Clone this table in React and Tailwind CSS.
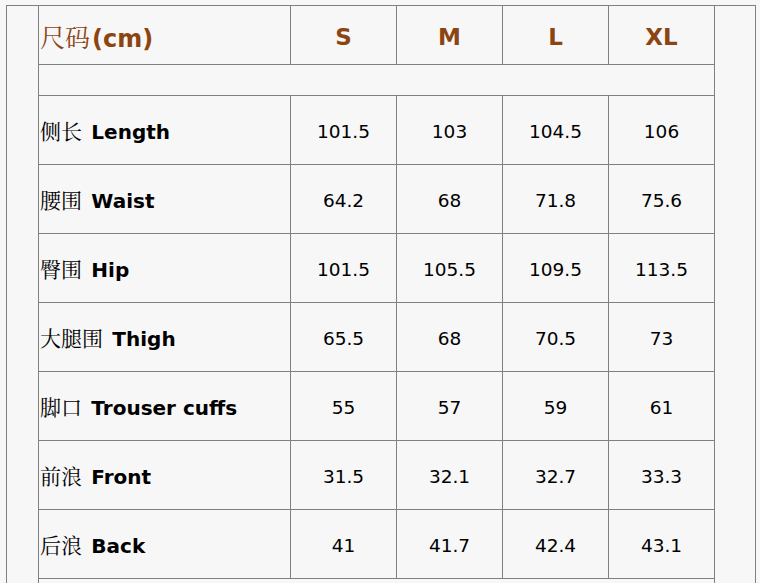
import React from 'react'

const rows = [
  ['侧长', 'Length', ['101.5', '103', '104.5', '106']],
  ['腰围', 'Waist', ['64.2', '68', '71.8', '75.6']],
  ['臀围', 'Hip', ['101.5', '105.5', '109.5', '113.5']],
  ['大腿围', 'Thigh', ['65.5', '68', '70.5', '73']],
  ['脚口', 'Trouser cuffs', ['55', '57', '59', '61']],
  ['前浪', 'Front', ['31.5', '32.1', '32.7', '33.3']],
  ['后浪', 'Back', ['41', '41.7', '42.4', '43.1']],
]

const cjk = { fontFamily: '"Noto Serif CJK SC", "Noto Sans CJK SC", serif' }

export default function App() {
  return (
    <div className="min-h-[583px] bg-[#f7f7f7] pt-[5px] pl-[6px] overflow-hidden text-black" style={{ fontFamily: '"DejaVu Sans", Verdana, sans-serif' }}>
      <div className="w-[750px] h-[600px] border-x border-t border-[#808080] pl-[31px]">
        <table className="-mt-px table-fixed border-collapse w-[676px]">
          <colgroup>
            <col className="w-[252px]" />
            <col className="w-[106px]" />
            <col className="w-[106px]" />
            <col className="w-[106px]" />
            <col className="w-[106px]" />
          </colgroup>
          <tbody>
            <tr className="h-[59px] text-[#8b4513]">
              <td className="border border-[#808080] pl-px pt-[4px] text-[24px] align-middle whitespace-nowrap">
                <span style={cjk} className="text-[25px] font-normal">尺码</span>
                <span className="ml-[2px] font-bold">(cm)</span>
              </td>
              {['S', 'M', 'L', 'XL'].map((s) => (
                <td key={s} className="border border-[#808080] pt-[4px] text-center text-[23px] font-bold">{s}</td>
              ))}
            </tr>
            <tr className="h-[31px]">
              <td colSpan={5} className="border border-[#808080]"></td>
            </tr>
            {rows.map(([zh, en, vals]) => (
              <tr key={en} className="h-[69px]">
                <td className="border border-[#808080] pl-px pt-[1px] text-[20px] whitespace-nowrap">
                  <span style={cjk} className="text-[21px]">{zh}</span>{' '}
                  <span className="ml-[3px] font-bold">{en}</span>
                </td>
                {vals.map((v, i) => (
                  <td key={i} className="border border-[#808080] pt-[3px] text-center text-[18.5px]">{v}</td>
                ))}
              </tr>
            ))}
            <tr className="h-[69px]">
              <td colSpan={5} className="border border-[#808080]"></td>
            </tr>
          </tbody>
        </table>
      </div>
    </div>
  )
}
